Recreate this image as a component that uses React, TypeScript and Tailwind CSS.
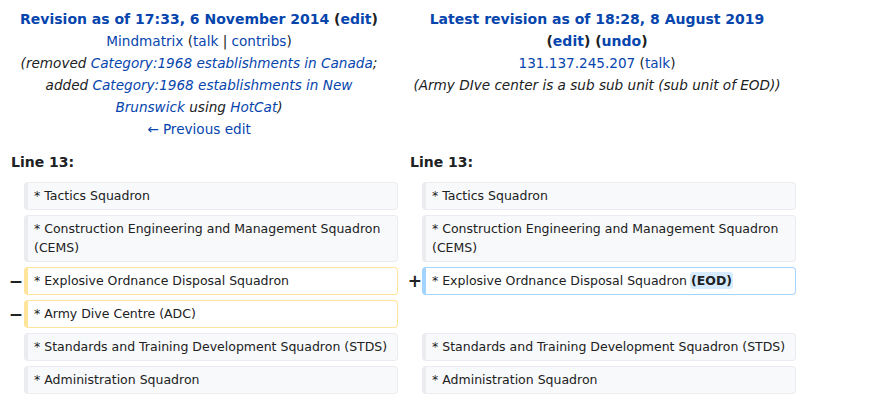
const ctx = 'border border-[#eaecf0] border-l-4 bg-[#f8f9fa] rounded-[4px] pl-[6px] pr-[6px] pt-[3px] pb-[4px]';
const del = 'border border-[#ffe49c] border-l-4 bg-white rounded-[4px] pl-[6px] pr-[6px] pt-[3px] pb-[4px]';
const add = 'border border-[#a3d3ff] border-l-4 bg-white rounded-[4px] pl-[6px] pr-[6px] pt-[3px] pb-[4px]';

const A = ({ children }: { children: React.ReactNode }) => (
  <a className="text-[#0645ad] cursor-pointer">{children}</a>
);

export default function App() {
  return (
    <div className="w-[874px] h-[400px] bg-white text-[#202122] overflow-hidden font-['DejaVu_Sans',sans-serif] pt-[8px]">
      <div className="grid grid-cols-[24px_374px_24px_374px] gap-y-[5px] text-[12.5px] leading-[19px]">
        {/* headers */}
        <div className="col-span-2 text-center text-[13.6px] leading-[22px]">
          <div className="font-bold text-[14px]">
            <A>Revision as of 17:33, 6 November 2014</A> (<A>edit</A>)
          </div>
          <div>
            <A>Mindmatrix</A> (<A>talk</A> | <A>contribs</A>)
          </div>
          <div className="italic">
            (removed <A>Category:1968 establishments in Canada</A>;<br />
            added <A>Category:1968 establishments in New</A>
            <br />
            <A>Brunswick</A> using <A>HotCat</A>)
          </div>
          <div>
            <A>← Previous edit</A>
          </div>
        </div>
        <div className="col-span-2 text-center text-[13.6px] leading-[22px]">
          <div className="font-bold text-[14px]">
            <A>Latest revision as of 18:28, 8 August 2019</A>
          </div>
          <div className="font-bold text-[14px]">
            (<A>edit</A>) (<A>undo</A>)
          </div>
          <div>
            <A>131.137.245.207</A> (<A>talk</A>)
          </div>
          <div className="italic">(Army DIve center is a sub sub unit (sub unit of EOD))</div>
        </div>

        {/* line numbers */}
        <div className="col-span-2 pl-[11px] font-bold text-[14px] leading-[22px] mt-[6px] mb-[4px]">Line 13:</div>
        <div className="col-span-2 pl-[12px] font-bold text-[14px] leading-[22px] mt-[6px] mb-[4px]">Line 13:</div>

        {/* context */}
        <div />
        <div className={ctx}>* Tactics Squadron</div>
        <div />
        <div className={ctx}>* Tactics Squadron</div>

        <div />
        <div className={ctx}>* Construction Engineering and Management Squadron (CEMS)</div>
        <div />
        <div className={ctx}>* Construction Engineering and Management Squadron (CEMS)</div>

        {/* changed */}
        <div className="flex items-center justify-end pr-[1px] font-bold text-[17px]">−</div>
        <div className={del}>* Explosive Ordnance Disposal Squadron</div>
        <div className="flex items-center justify-end font-bold text-[17px]">+</div>
        <div className={add}>
          * Explosive Ordnance Disposal Squadron
          <span className="bg-[#d8ecff] font-bold rounded-[3px] ml-[3px] px-[1px] py-[1px]">(EOD)</span>
        </div>

        <div className="flex items-center justify-end pr-[1px] font-bold text-[17px]">−</div>
        <div className={del}>* Army Dive Centre (ADC)</div>
        <div />
        <div />

        <div />
        <div className={ctx}>* Standards and Training Development Squadron (STDS)</div>
        <div />
        <div className={ctx}>* Standards and Training Development Squadron (STDS)</div>

        <div />
        <div className={ctx}>* Administration Squadron</div>
        <div />
        <div className={ctx}>* Administration Squadron</div>
      </div>
    </div>
  );
}
